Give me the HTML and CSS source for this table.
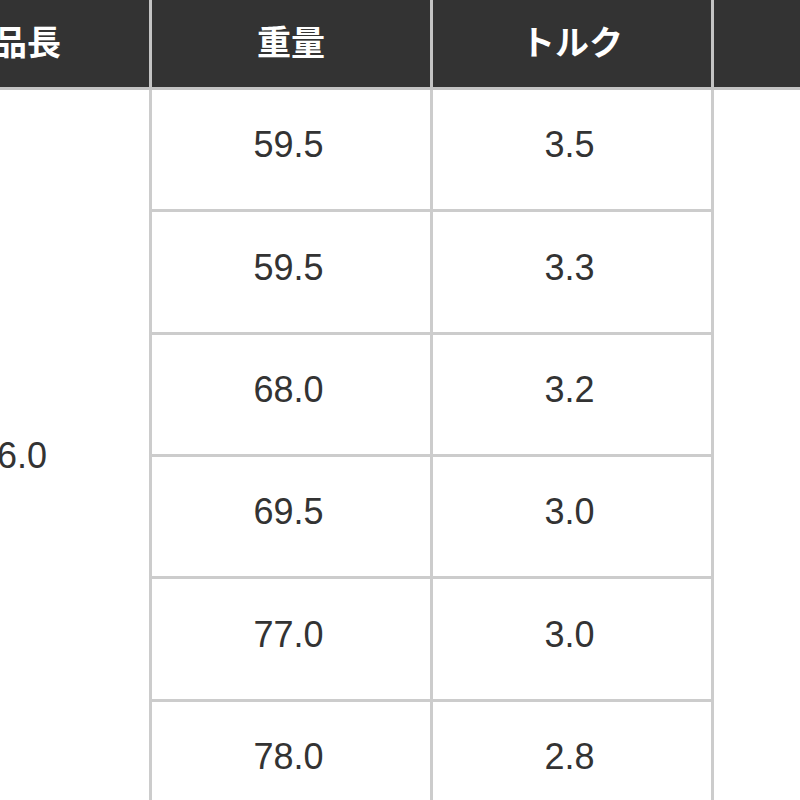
FILE: index.html
```html
<!DOCTYPE html>
<html lang="ja">
<head>
<meta charset="utf-8">
<link rel="stylesheet" href="styles.css">
</head>
<body>
<div class="viewport">
  <table class="spec">
    <thead>
      <tr>
        <th>製品長</th>
        <th>重量</th>
        <th>トルク</th>
        <th></th>
      </tr>
    </thead>
    <tbody>
      <tr>
        <td class="span" rowspan="6">46.0</td>
        <td>59.5</td>
        <td>3.5</td>
        <td class="span" rowspan="6"></td>
      </tr>
      <tr><td>59.5</td><td>3.3</td></tr>
      <tr><td>68.0</td><td>3.2</td></tr>
      <tr><td>69.5</td><td>3.0</td></tr>
      <tr><td>77.0</td><td>3.0</td></tr>
      <tr><td>78.0</td><td>2.8</td></tr>
    </tbody>
  </table>
</div>
</body>
</html>
```

FILE: styles.css
```css
html, body {
  margin: 0;
  padding: 0;
  background: #ffffff;
}

.viewport {
  width: 800px;
  height: 800px;
  overflow: hidden;
  position: relative;
}

.spec {
  border-collapse: collapse;
  table-layout: fixed;
  width: 1124px;
  margin-left: -132px;
  margin-top: -6px;
}

.spec th,
.spec td {
  width: 278px;
  padding: 0;
  text-align: center;
  vertical-align: middle;
}

.spec th {
  height: 93px;
  background: #333333;
  color: #ffffff;
  font-family: "Noto Sans CJK JP", "Noto Sans", sans-serif;
  font-weight: 700;
  font-size: 34px;
  line-height: 1;
  border: 3px solid #c4c4c4;
  border-top: none;
}

.spec td {
  height: 110.35px;
  padding: 0 5px 9px 0;
  color: #333333;
  font-family: "Liberation Sans", Arial, sans-serif;
  font-size: 36px;
  line-height: 1;
  border: 3px solid #cccccc;
}

.spec td.span {
  padding: 0 0 0 4px;
}
```
